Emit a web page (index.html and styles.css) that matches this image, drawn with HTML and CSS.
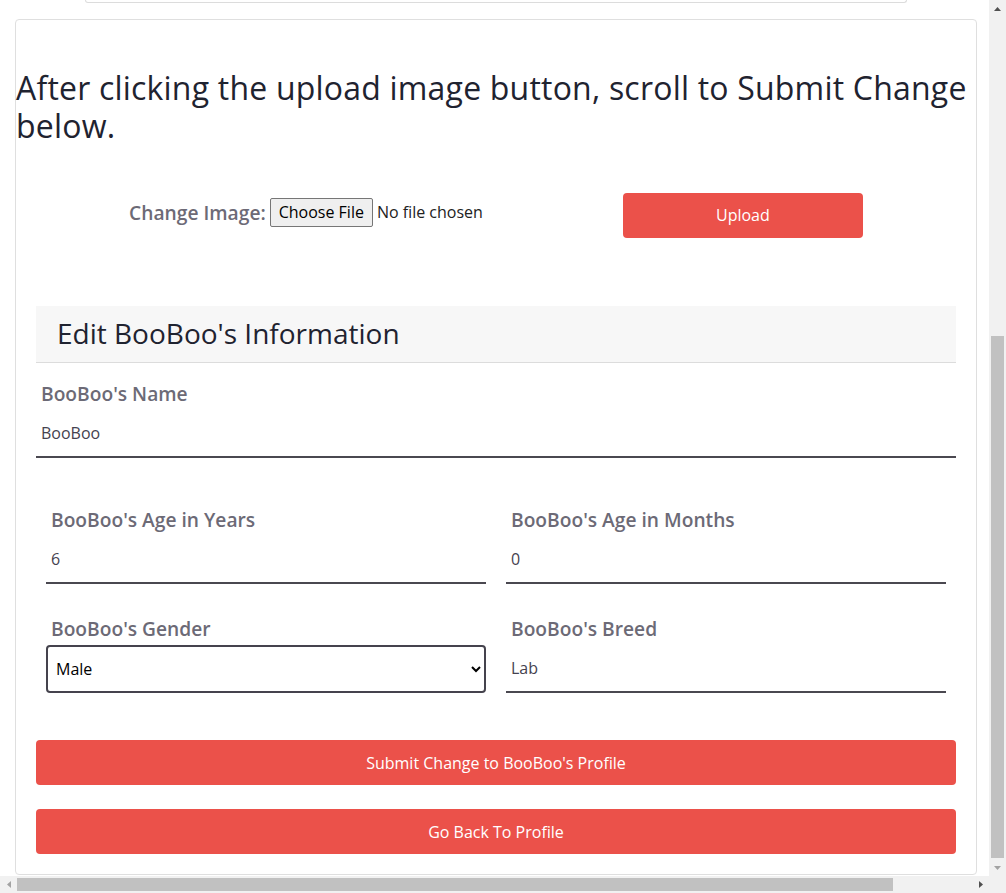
FILE: index.html
```html
<!DOCTYPE html>
<html lang="en">
<head>
<meta charset="utf-8">
<title>Edit BooBoo's Information</title>
<link rel="stylesheet" href="styles.css">
</head>
<body>
<div class="window">
  <main class="page">
    <div class="prev-card"></div>
    <section class="card">
      <h2 class="intro">After clicking the upload image button, scroll to Submit Change below.</h2>
      <form class="upload-row">
        <div class="file-group">
          <label class="file-label">Change Image:</label>
          <button type="button" class="file-btn">Choose File</button>
          <span class="file-status">No file chosen</span>
        </div>
        <button type="button" class="btn upload-btn">Upload</button>
      </form>
      <form class="edit-form">
        <div class="edit-header"><h3>Edit BooBoo's Information</h3></div>
        <div class="field name-field">
          <label>BooBoo's Name</label>
          <input class="line-input" type="text" value="BooBoo">
        </div>
        <div class="grid-row first-row">
          <div class="field">
            <label>BooBoo's Age in Years</label>
            <input class="line-input" type="text" value="6">
          </div>
          <div class="field">
            <label>BooBoo's Age in Months</label>
            <input class="line-input" type="text" value="0">
          </div>
        </div>
        <div class="grid-row second-row">
          <div class="field">
            <label>BooBoo's Gender</label>
            <select class="select-input">
              <option selected>Male</option>
              <option>Female</option>
            </select>
          </div>
          <div class="field">
            <label>BooBoo's Breed</label>
            <input class="line-input" type="text" value="Lab">
          </div>
        </div>
        <button type="button" class="btn wide submit-btn">Submit Change to BooBoo's Profile</button>
        <button type="button" class="btn wide back-btn">Go Back To Profile</button>
      </form>
    </section>
  </main>
  <div class="vscroll">
    <div class="sb-btn"><svg width="7" height="4" viewBox="0 0 7 4"><polygon points="0,4 3.5,0 7,4" fill="#505050"/></svg></div>
    <div class="vtrack"><div class="vthumb"></div></div>
    <div class="sb-btn"><svg width="7" height="4" viewBox="0 0 7 4"><polygon points="0,0 7,0 3.5,4" fill="#a3a3a3"/></svg></div>
  </div>
  <div class="hscroll">
    <div class="sb-btn"><svg width="4" height="7" viewBox="0 0 4 7"><polygon points="4,0 4,7 0,3.5" fill="#a3a3a3"/></svg></div>
    <div class="htrack"><div class="hthumb"></div></div>
    <div class="sb-btn"><svg width="4" height="7" viewBox="0 0 4 7"><polygon points="0,0 4,3.5 0,7" fill="#505050"/></svg></div>
  </div>
  <div class="corner"></div>
</div>
</body>
</html>
```

FILE: styles.css
```css
* { box-sizing: border-box; }

html, body {
  margin: 0;
  height: 100%;
  overflow: hidden;
}

body {
  font-family: "Open Sans", "Liberation Sans", sans-serif;
  color: #212529;
  background: #fff;
}

.window {
  display: grid;
  grid-template-columns: 989px 17px;
  grid-template-rows: 876px 17px;
  width: 1006px;
  height: 893px;
}

.page {
  overflow: hidden;
  background: #fff;
}

.prev-card {
  width: 822px;
  height: 3px;
  margin-left: 85px;
  border: 1px solid #dcdcdc;
  border-top: 0;
  border-radius: 0 0 4px 4px;
}

.card {
  margin: 16px 0 0 15px;
  width: 962px;
  height: 856px;
  border: 1px solid #dfdfdf;
  border-radius: 4px;
  padding: 49px 0 20px;
}

.intro {
  margin: 0;
  font-size: 32px;
  font-weight: 400;
  line-height: 38.4px;
  letter-spacing: 0.2px;
  color: #1f2330;
}

.upload-row {
  display: flex;
  justify-content: center;
  align-items: flex-start;
  gap: 140px;
  margin-top: 47px;
}

.file-group {
  display: flex;
  align-items: center;
  margin-top: 5px;
}

.file-label {
  font-size: 19.2px;
  font-weight: 600;
  line-height: 23px;
  color: #6c6a76;
  margin-right: 4px;
}

.file-btn {
  height: 29px;
  padding: 0 8px;
  font-family: inherit;
  font-size: 16px;
  color: #000;
  background: #efefef;
  border: 1px solid #767676;
  border-radius: 2px;
}

.file-status {
  margin-left: 4px;
  font-size: 16px;
  color: #222;
}

.btn {
  border: 0;
  border-radius: 4px;
  background: #eb514a;
  color: #fff;
  font-family: inherit;
  font-size: 16px;
}

.upload-btn {
  width: 240px;
  height: 45px;
}

.edit-form {
  margin: 68px 20px 0;
}

.edit-header {
  background: #f7f7f7;
  border-bottom: 1px solid #dcdcdc;
  padding: 11px 21px 12px;
}

.edit-header h3 {
  margin: 0;
  font-size: 28px;
  font-weight: 400;
  line-height: 33.6px;
  color: #1f2330;
}

.name-field {
  margin-top: 19px;
}

.field label {
  display: block;
  padding-left: 5px;
  margin-bottom: 5px;
  font-size: 19.2px;
  font-weight: 600;
  line-height: 23px;
  color: #6c6a76;
}

.line-input {
  display: block;
  width: 100%;
  height: 48px;
  padding: 0 5px;
  border: 0;
  border-bottom: 2px solid #4a4850;
  background: transparent;
  font-family: inherit;
  font-size: 16px;
  color: #45424f;
  outline: none;
}

.grid-row {
  display: grid;
  grid-template-columns: 1fr 1fr;
  column-gap: 20px;
  padding: 0 10px;
}

.first-row { margin-top: 50px; }
.second-row { margin-top: 33px; }

.select-input {
  display: block;
  width: 100%;
  height: 48px;
  padding: 0 4px;
  border: 2px solid #45434d;
  border-radius: 4px;
  background: #fff;
  font-family: inherit;
  font-size: 16px;
  color: #000;
}

.wide {
  display: block;
  width: 100%;
  height: 45px;
}

.submit-btn { margin-top: 47px; }
.back-btn { margin-top: 24px; }

.vscroll {
  display: flex;
  flex-direction: column;
  background: #f1f1f1;
}

.hscroll {
  display: flex;
  background: #f1f1f1;
}

.sb-btn {
  width: 17px;
  height: 17px;
  flex: none;
  display: flex;
  align-items: center;
  justify-content: center;
}

.vtrack {
  flex: 1;
  padding: 319px 2px 0;
}

.vthumb {
  height: 522px;
  background: #c1c1c1;
}

.htrack {
  flex: 1;
  padding: 2px 0;
}

.hthumb {
  width: 876px;
  height: 13px;
  background: #c1c1c1;
}

.corner {
  background: #f1f1f1;
}
```
